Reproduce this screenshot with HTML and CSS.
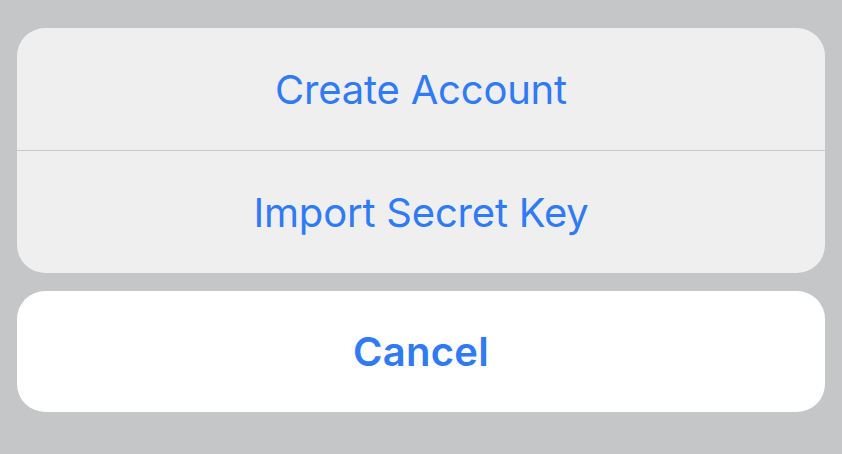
FILE: index.html
```html
<!DOCTYPE html>
<html lang="en">
<head>
    <meta charset="UTF-8">
    <meta name="viewport" content="width=device-width, initial-scale=1.0">
    <title>Action Sheet</title>
    <link rel="stylesheet" href="styles.css">
</head>
<body>
    <div class="sheet">
        <!-- Grupo de acciones -->
        <div class="grupo">
            <button class="accion">Create Account</button>
            <button class="accion">Import Secret Key</button>
        </div>

        <!-- Boton cancelar -->
        <div class="grupo cancelar">
            <button class="accion bold">Cancel</button>
        </div>
    </div>
</body>
</html>
```

FILE: styles.css
```css
body {
    margin: 0;
    background-color: #c5c6c8;
    font-family: Inter, "Liberation Sans", Arial, sans-serif;
}
.sheet {
    padding: 28px 17px;
    display: flex;
    flex-direction: column;
    gap: 18px;
}
.grupo {
    background-color: #efefef;
    border-radius: 28px;
    overflow: hidden;
    display: flex;
    flex-direction: column;
}
.cancelar {
    background-color: #ffffff;
}
.accion {
    height: 122px;
    border: none;
    background: transparent;
    color: #2f7af5;
    font-family: inherit;
    font-size: 40px;
    letter-spacing: -0.2px;
    padding: 0;
    cursor: pointer;
}
.accion + .accion {
    height: 123px;
    border-top: 1px solid #c9c9cb;
}
.cancelar .accion {
    height: 121px;
}
.bold {
    font-weight: 600;
    letter-spacing: 0.3px;
}
```
